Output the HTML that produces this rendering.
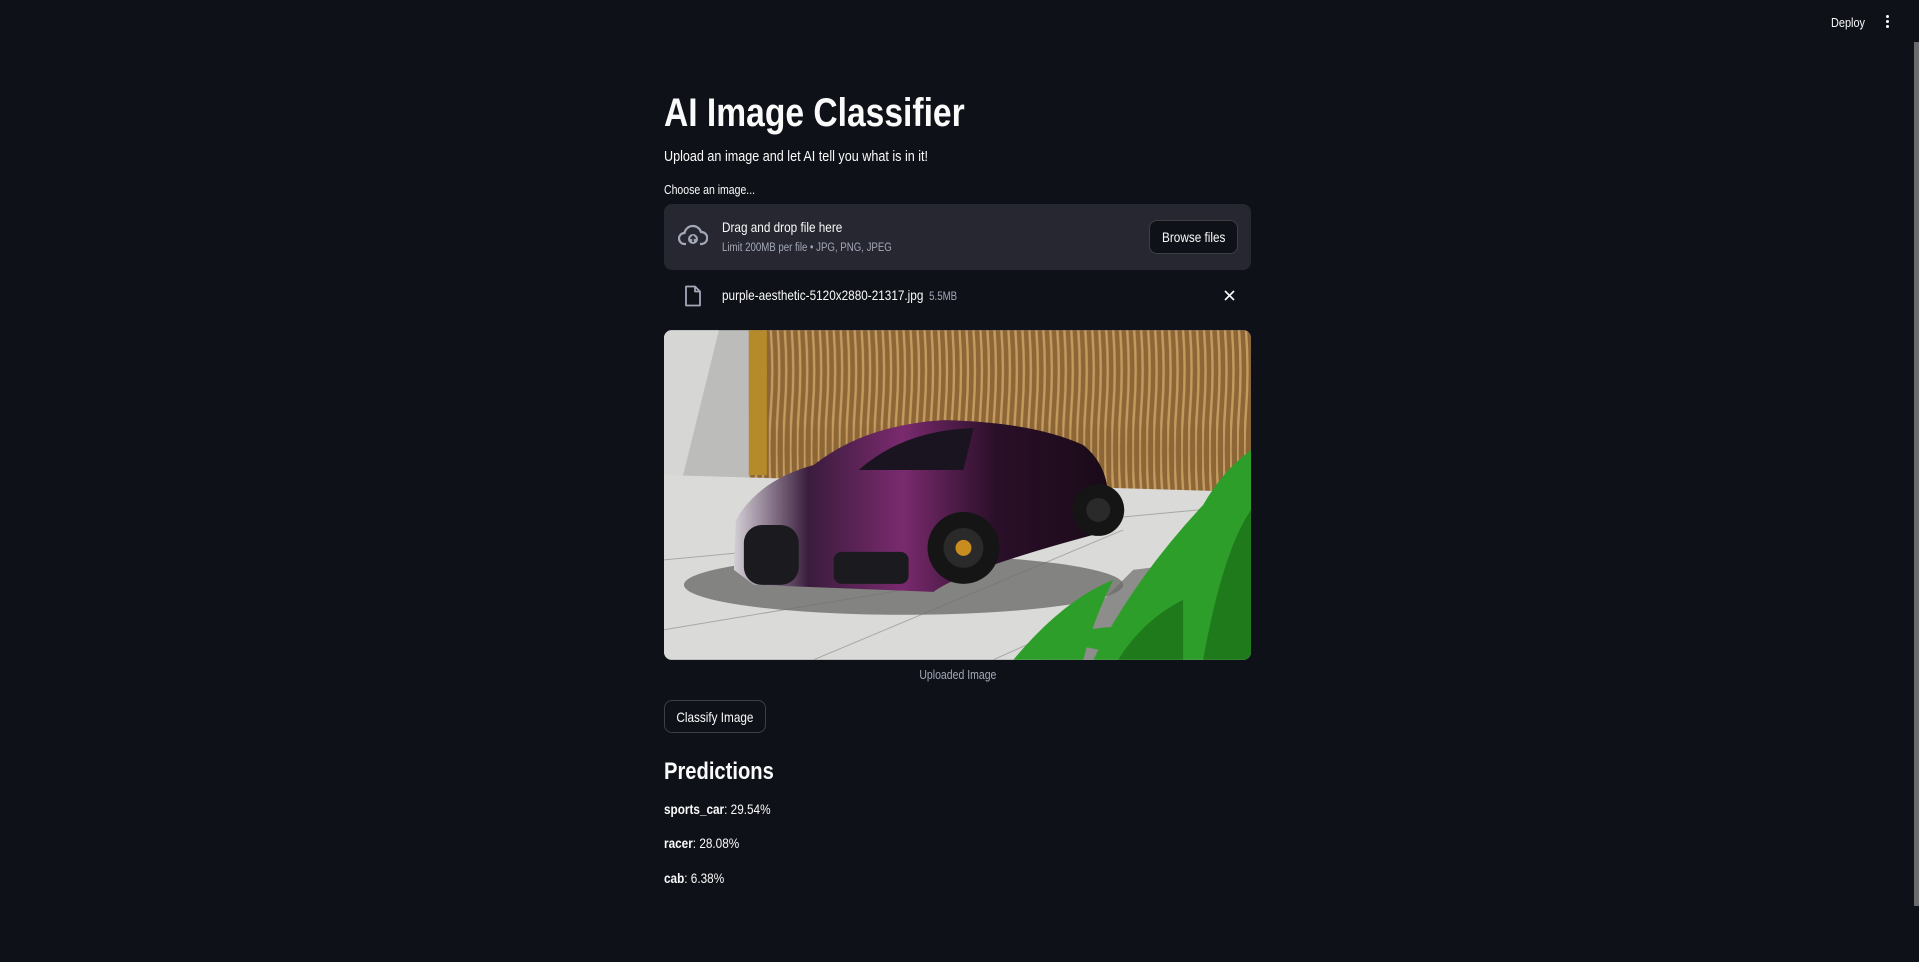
<!DOCTYPE html>
<html><head><meta charset="utf-8"><style>
*{margin:0;padding:0;box-sizing:border-box}
html,body{width:1919px;height:962px;overflow:hidden;background:#0e1117;color:#fafafa;font-family:"Liberation Sans",sans-serif}
.abs{position:absolute;white-space:nowrap;transform:scaleX(0.84);transform-origin:0 0}
.btn{position:absolute;border:1px solid rgba(250,250,250,0.2);border-radius:8px;background:#0e1117;color:#fafafa;font-size:15px;display:flex;align-items:center;justify-content:center;white-space:nowrap}
.btn span{display:inline-block;transform:scaleX(0.84)}
</style></head><body>
<div class="abs" style="left:1831px;top:15px;font-size:13px">Deploy</div>
<div style="position:absolute;left:1886px;top:15px;width:4px">
<div style="width:3px;height:3px;background:#fafafa;border-radius:50%;margin-bottom:2px"></div>
<div style="width:3px;height:3px;background:#fafafa;border-radius:50%;margin-bottom:2px"></div>
<div style="width:3px;height:3px;background:#fafafa;border-radius:50%"></div></div>
<div style="position:absolute;left:1914px;top:42px;width:5px;height:864px;background:#6b6b6b"></div>

<div class="abs" style="left:664px;top:91px;font-size:40px;font-weight:bold">AI Image Classifier</div>
<div class="abs" style="left:664px;top:148px;font-size:15px">Upload an image and let AI tell you what is in it!</div>
<div class="abs" style="left:664px;top:183px;font-size:12.5px">Choose an image...</div>

<div style="position:absolute;left:664px;top:204px;width:587px;height:66px;background:#262730;border-radius:8px"></div>
<svg style="position:absolute;left:678px;top:223px" width="30" height="26" viewBox="0 0 30 26"><path d="M8 21 H6.5 A5.5 5.5 0 0 1 6.5 10 A8.5 8.5 0 0 1 23 9 A6 6 0 0 1 23.5 21 H22" fill="none" stroke="#a3a8b8" stroke-width="2.2"/><circle cx="15" cy="16" r="5" fill="#a3a8b8"/><path d="M15 19 V13.5 M12.5 15.8 L15 13.3 L17.5 15.8" stroke="#262730" stroke-width="1.6" fill="none"/></svg>
<div class="abs" style="left:722px;top:219px;font-size:14px">Drag and drop file here</div>
<div class="abs" style="left:722px;top:242px;font-size:11.5px;color:#a3a8b8">Limit 200MB per file • JPG, PNG, JPEG</div>
<div class="btn" style="left:1149px;top:220px;width:89px;height:34px;font-size:14px"><span>Browse files</span></div>

<svg style="position:absolute;left:684px;top:285px" width="18" height="22" viewBox="0 0 18 22"><path d="M2 1.5 H11 L16 6.5 V20.5 H2 Z M11 1.5 V6.5 H16" fill="none" stroke="#a3a8b8" stroke-width="1.8" stroke-linejoin="round"/></svg>
<div class="abs" style="left:722px;top:287px;font-size:14px">purple-aesthetic-5120x2880-21317.jpg <span style="font-size:11.5px;color:#a3a8b8;margin-left:3px">5.5MB</span></div>
<svg style="position:absolute;left:1224px;top:290px" width="11" height="11"><path d="M1 1 L10 10 M10 1 L1 10" stroke="#fafafa" stroke-width="1.6"/></svg>

<svg style="position:absolute;left:664px;top:330px;border-radius:8px" width="587" height="330" viewBox="0 0 588 330">
<defs>
<pattern id="wood" width="7" height="160" patternUnits="userSpaceOnUse"><rect width="7" height="160" fill="#8c6637"/><path d="M2 0 Q5 40 2 80 Q-1 120 2 160" stroke="#c49a5e" stroke-width="2.4" fill="none"/></pattern>
<linearGradient id="car" x1="0" x2="1" y1="0" y2="0"><stop offset="0" stop-color="#d4cfd6"/><stop offset="0.2" stop-color="#3a1c3d"/><stop offset="0.45" stop-color="#7a2a6e"/><stop offset="0.7" stop-color="#2a0f28"/><stop offset="1" stop-color="#1a0a18"/></linearGradient>
</defs>
<rect width="588" height="330" fill="#d9d9d7"/>
<rect x="0" y="0" width="88" height="150" fill="#bcbcba"/>
<polygon points="0,0 55,0 18,150 0,150" fill="#d6d6d4"/>
<rect x="85" y="0" width="503" height="162" fill="url(#wood)"/>
<rect x="85" y="0" width="18" height="145" fill="#b58a2a"/>
<polygon points="0,145 588,162 588,330 0,330" fill="#dadad8"/>
<path d="M0 230 L588 175 M0 300 L300 250 M150 330 L460 200 M330 330 L588 215" stroke="#a8a8a6" stroke-width="1"/>
<polygon points="380,330 470,240 588,225 588,330" fill="#8d8d8b"/>
<ellipse cx="240" cy="255" rx="220" ry="30" fill="#6d6d6b" opacity="0.8"/>
<path d="M70 240 L72 190 Q95 150 150 135 Q200 95 280 90 Q370 92 420 115 Q445 135 445 170 L430 205 Q300 240 270 262 L90 255 Z" fill="url(#car)"/>
<path d="M195 140 Q240 100 310 98 L300 140 Z" fill="#1a1420"/>
<rect x="80" y="195" width="55" height="60" rx="18" fill="#1b1b1f"/>
<rect x="170" y="222" width="75" height="32" rx="8" fill="#1b1b1f"/>
<circle cx="300" cy="218" r="36" fill="#151515"/><circle cx="300" cy="218" r="20" fill="#2a2a2a"/><circle cx="300" cy="218" r="8" fill="#c98d1f"/>
<circle cx="435" cy="180" r="26" fill="#151515"/><circle cx="435" cy="180" r="12" fill="#2a2a2a"/>
<path d="M350 330 Q400 270 450 250 Q430 290 420 330 Z M430 330 Q470 250 540 175 Q560 140 588 120 L588 330 Z M510 330 Q520 250 588 200 Z M390 310 Q440 290 500 300 L480 330 Z" fill="#2e9e2a"/>
<path d="M540 330 Q560 220 588 180 L588 330 Z M455 330 Q480 290 520 270 L520 330Z" fill="#1f7a1c"/>
</svg>
<div style="position:absolute;left:0;width:1915px;text-align:center;top:668px;font-size:12.5px;color:#a3a8b8"><span style="display:inline-block;transform:scaleX(0.84)">Uploaded Image</span></div>

<div class="btn" style="left:664px;top:700px;width:102px;height:33px;font-size:14px"><span>Classify Image</span></div>
<div class="abs" style="left:664px;top:758px;font-size:24px;font-weight:bold">Predictions</div>
<div class="abs" style="left:664px;top:801px;font-size:14px"><b>sports_car</b>: 29.54%</div>
<div class="abs" style="left:664px;top:835px;font-size:14px"><b>racer</b>: 28.08%</div>
<div class="abs" style="left:664px;top:870px;font-size:14px"><b>cab</b>: 6.38%</div>
</body></html>
